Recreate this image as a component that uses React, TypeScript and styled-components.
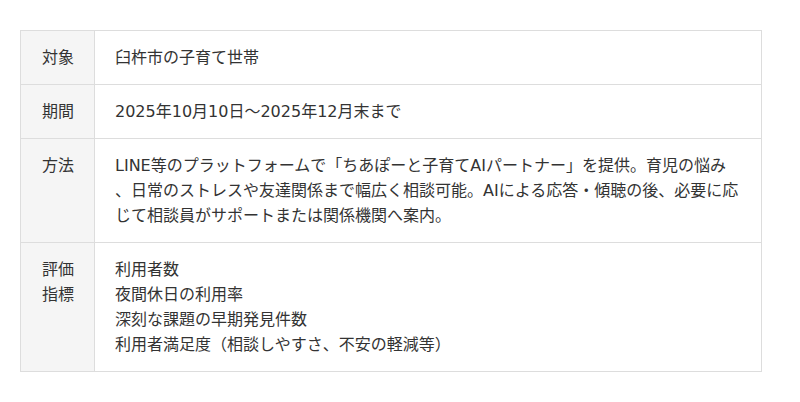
import React from "react";
import styled, { createGlobalStyle } from "styled-components";

const GlobalStyle = createGlobalStyle`
  body {
    margin: 0;
    background: #fff;
    font-family: "DejaVu Sans", "Noto Sans CJK JP", sans-serif;
    color: #333;
  }
`;

const Page = styled.div`
  padding: 30px 38px 30px 20px;
`;

const Table = styled.table`
  width: 742px;
  border-collapse: collapse;
  font-size: 16px;
  line-height: 25px;
`;

const Label = styled.th`
  width: 32px;
  padding: 14px 20px 14px 21px;
  background: #f5f5f5;
  border: 1px solid #ddd;
  font-weight: normal;
  text-align: left;
  vertical-align: top;
`;

const Cell = styled.td`
  padding: 14px 20px;
  border: 1px solid #ddd;
  vertical-align: top;
  line-break: anywhere;
`;

const Line = styled.div``;

const rows: { label: string; lines: string[] }[] = [
  { label: "対象", lines: ["臼杵市の子育て世帯"] },
  { label: "期間", lines: ["2025年10月10日～2025年12月末まで"] },
  {
    label: "方法",
    lines: [
      "LINE等のプラットフォームで「ちあぽーと子育てAIパートナー」を提供。育児の悩み、日常のストレスや友達関係まで幅広く相談可能。AIによる応答・傾聴の後、必要に応じて相談員がサポートまたは関係機関へ案内。",
    ],
  },
  {
    label: "評価指標",
    lines: [
      "利用者数",
      "夜間休日の利用率",
      "深刻な課題の早期発見件数",
      "利用者満足度（相談しやすさ、不安の軽減等）",
    ],
  },
];

const App = () => (
  <>
    <GlobalStyle />
    <Page>
      <Table>
        <tbody>
          {rows.map((r) => (
            <tr key={r.label}>
              <Label>{r.label}</Label>
              <Cell>
                {r.lines.map((l) => (
                  <Line key={l}>{l}</Line>
                ))}
              </Cell>
            </tr>
          ))}
        </tbody>
      </Table>
    </Page>
  </>
);

export default App;
